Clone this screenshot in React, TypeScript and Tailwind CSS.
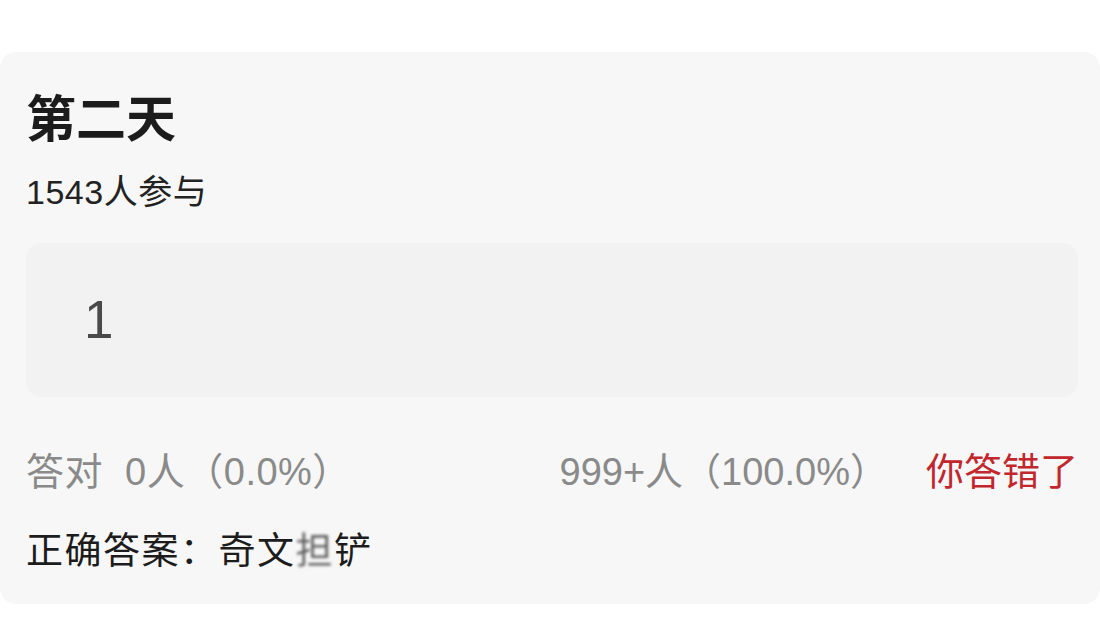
const font = { fontFamily: '"Liberation Sans", "Noto Sans CJK SC", sans-serif' };

const App = () => {
  return (
    <div className="w-[1100px] h-[640px] bg-white overflow-hidden pt-[52px]" style={font}>
      <div className="h-[552px] bg-[#f7f7f7] rounded-[16px] pl-[26px] pr-[22px] pt-[36px]">
        <h2 className="text-[50px] leading-[64px] font-bold text-[#1c1c1c]">第二天</h2>
        <div className="mt-[18px] text-[34px] leading-[44px] text-[#222] tracking-[0.5px]">1543人参与</div>

        <div className="mt-[29px] h-[154px] bg-[#f2f2f2] rounded-[16px] flex items-center pl-[58px]">
          <span className="text-[53px] leading-none text-[#4a4a4a] pb-[2px]">1</span>
        </div>

        <div className="mt-[49px] flex items-center text-[38px] leading-[52px]">
          <span className="text-[#8a8a8a] tracking-[0.5px]">答对&nbsp; 0人（0.0%）</span>
          <span className="ml-auto text-[#8a8a8a]">999+人（100.0%）</span>
          <span className="ml-[38px] text-[#c1272d]">你答错了</span>
        </div>

        <div className="mt-[30px] text-[37px] leading-[48px] text-[#1c1c1c] tracking-[1.5px]">
          正确答案：奇文
          <span className="relative inline-block">
            <span className="blur-[1.5px] opacity-70">担</span>
          </span>
          铲
        </div>
      </div>
    </div>
  );
};

export default App;
